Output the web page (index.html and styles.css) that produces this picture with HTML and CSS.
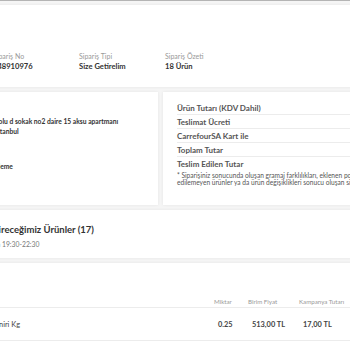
FILE: index.html
```html
<!DOCTYPE html>
<html lang="tr">
<head>
    <meta charset="UTF-8">
    <meta name="viewport" content="width=device-width, initial-scale=1.0">
    <title>Sipariş Detayı</title>
    <link rel="stylesheet" href="styles.css">
</head>
<body>
    <div class="page">
        <section class="card order-info">
            <div class="info-item">
                <span class="info-label">Sipariş No</span>
                <span class="info-value">148910976</span>
            </div>
            <div class="info-item">
                <span class="info-label">Sipariş Tipi</span>
                <span class="info-value">Size Getirelim</span>
            </div>
            <div class="info-item">
                <span class="info-label">Sipariş Özeti</span>
                <span class="info-value">18 Ürün</span>
            </div>
        </section>

        <div class="summary-row">
            <section class="card address-card">
                <p class="address">Yolu d sokak no2 daire 15 aksu apartmanı</p>
                <p class="address">İstanbul</p>
                <p class="payment">Ödeme</p>
            </section>

            <section class="card totals-card">
                <div class="total-row">Ürün Tutarı (KDV Dahil)</div>
                <div class="total-row">Teslimat Ücreti</div>
                <div class="total-row">CarrefourSA Kart ile</div>
                <div class="total-row">Toplam Tutar</div>
                <div class="total-row last">Teslim Edilen Tutar</div>
                <p class="note">* Siparişiniz sonucunda oluşan gramaj farklılıkları, eklenen poşet ücreti, teslim</p>
                <p class="note">edilemeyen ürünler ya da ürün değişiklikleri sonucu oluşan sipariş tutarı farkı</p>
            </section>
        </div>

        <section class="card products-head">
            <h2>Getireceğimiz Ürünler (17)</h2>
            <p class="slot">Bugün 19:30-22:30</p>
        </section>

        <section class="card products">
            <div class="table-head">
                <span class="col-name"></span>
                <span class="col">Miktar</span>
                <span class="col">Birim Fiyat</span>
                <span class="col">Kampanya Tutarı</span>
            </div>
            <div class="table-row">
                <span class="col-name">Beyaz Peyniri Kg</span>
                <span class="col val">0.25</span>
                <span class="col val">513,00 TL</span>
                <span class="col val">17,00 TL</span>
            </div>
        </section>
    </div>
</body>
</html>
```

FILE: styles.css
```css
body {
    margin: 0;
    background-color: #f5f5f5;
    font-family: 'Lato', 'Open Sans', sans-serif;
    color: #333;
    overflow: hidden;
}

p, h2 {
    margin: 0;
}

.page {
    width: 480px;
    margin-left: -60px;
    border-top: 1px solid #b4b4b4;
    padding-top: 4px;
    display: flex;
    flex-direction: column;
    gap: 5px;
}

.card {
    background-color: white;
    box-shadow: 0 0 3px rgba(0, 0, 0, 0.07);
}

/* bilgi satırı */
.order-info {
    height: 82px;
    box-sizing: border-box;
    padding: 46px 0 0 53px;
    display: grid;
    grid-template-columns: repeat(3, 86px);
    align-content: start;
}

.info-item {
    display: flex;
    flex-direction: column;
}

.info-label {
    font-size: 7px;
    line-height: 10px;
    color: #999;
}

.info-value {
    font-size: 7.6px;
    line-height: 10px;
    font-weight: bold;
    color: #333;
}

.summary-row {
    display: grid;
    grid-template-columns: 218px 1fr;
    gap: 5px;
    height: 113px;
}

.address-card {
    padding: 24px 0 0 55px;
}

.address, .payment {
    font-size: 6.7px;
    line-height: 10px;
    font-weight: bold;
    color: #333;
    white-space: nowrap;
}

.payment {
    margin-top: 25px;
    margin-left: -4px;
}

.totals-card {
    padding: 9px 0 0 14px;
}

.total-row {
    height: 14px;
    line-height: 14px;
    font-size: 8px;
    font-weight: bold;
    color: #555;
    border-bottom: 1px solid #ececec;
    box-sizing: border-box;
}

.total-row.last {
    border-bottom: none;
}

.note {
    font-size: 6.6px;
    line-height: 7px;
    color: #555;
    white-space: nowrap;
}

.note:first-of-type {
    margin-top: 1px;
}

.products-head {
    height: 48px;
    box-sizing: border-box;
    padding: 13px 0 0 43px;
}

.products-head h2 {
    font-size: 9.5px;
    line-height: 14px;
    font-weight: bold;
    color: #333;
    white-space: nowrap;
}

.slot {
    margin-top: 2px;
    margin-left: -2px;
    font-size: 6.8px;
    line-height: 10px;
    color: #777;
    white-space: nowrap;
}

.products {
    padding-top: 32px;
    height: 120px;
}

.table-head, .table-row {
    display: grid;
    grid-template-columns: 248px 34px 51px 90px;
    padding-left: 26px;
    border-bottom: 1px solid #ececec;
    align-items: center;
}

.table-head {
    height: 12px;
    font-size: 6.2px;
    color: #999;
}

.table-row {
    height: 32px;
    font-size: 7.4px;
    font-weight: bold;
    color: #444;
}

.col-name {
    font-weight: normal;
    white-space: nowrap;
}

.val {
    padding-left: 4px;
}
```
